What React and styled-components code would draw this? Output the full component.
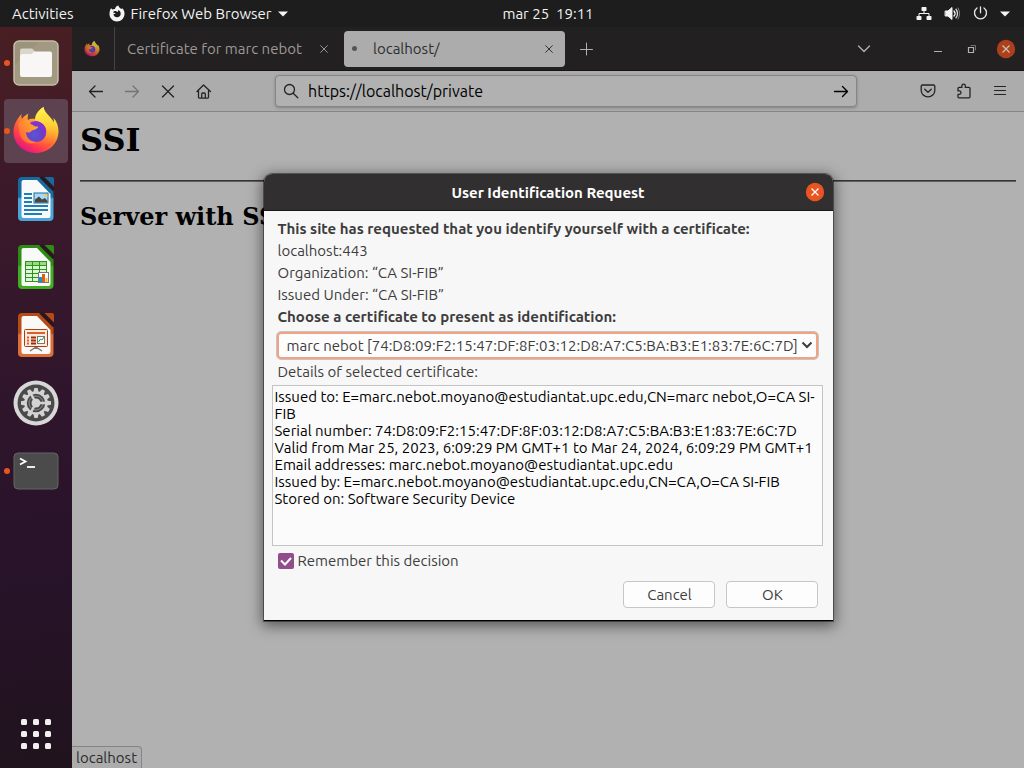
import React, { useId } from "react";
import styled, { createGlobalStyle } from "styled-components";

const GlobalStyle = createGlobalStyle`
  * { box-sizing: border-box; }
  body { margin: 0; background: #b1b1b1; font-family: Ubuntu, "Noto Sans", sans-serif; font-size: 15px; }
  button, select, input, textarea { font: inherit; margin: 0; }
  svg { display: block; flex: none; }
`;

const Desktop = styled.div`
  min-height: 100vh;
  display: flex;
  flex-direction: column;
`;

/* ---- system bar ---- */
const SystemBar = styled.header`
  display: flex;
  align-items: center;
  height: 27px;
  background: #1d1d1d;
  color: #f2f2f2;
`;
const BarLeft = styled.div`
  flex: 1 1 86px;
  display: flex;
  align-items: center;
  gap: 35px;
  padding-left: 12px;
`;
const BarRight = styled.div`
  flex: 1 1 14px;
  display: flex;
  align-items: center;
  justify-content: flex-end;
  gap: 12px;
  padding-right: 14px;
`;
const BarButton = styled.button`
  display: flex;
  align-items: center;
  gap: 6px;
  padding: 0;
  border: 0;
  background: none;
  color: inherit;
  line-height: 20px;
  white-space: pre;
`;

/* ---- dock ---- */
const Workspace = styled.div`
  flex: 1;
  display: flex;
`;
const Dock = styled.nav`
  width: 72px;
  flex: none;
  display: flex;
  flex-direction: column;
  align-items: center;
  gap: 4px;
  padding: 4px 0 2px;
  background: linear-gradient(172deg, #491f22 0%, #3b192a 24%, #31162c 45%, #28132a 72%, #20131d 100%);
`;
const DockItem = styled.button`
  position: relative;
  width: 64px;
  height: 64px;
  display: grid;
  place-items: center;
  padding: 0;
  border: 0;
  border-radius: 4px;
  background: ${(p) => (p.$active ? "#5d424f" : "transparent")};
  margin-top: ${(p) => (p.$last ? "auto" : 0)};
`;
const RunningDot = styled.span`
  position: absolute;
  left: 0;
  top: 29px;
  width: 6px;
  height: 6px;
  border-radius: 50%;
  background: #e95420;
`;

/* ---- browser window ---- */
const Browser = styled.div`
  position: relative;
  flex: 1;
  min-width: 0;
  display: flex;
  flex-direction: column;
  background: #b1b1b1;
`;
const TabStrip = styled.div`
  display: flex;
  align-items: center;
  height: 44px;
  background: #232021;
  border-bottom: 1px solid #161415;
  color: #b3b0ae;
`;
const PinnedTab = styled.button`
  width: 43px;
  height: 100%;
  padding: 0 0 0 12px;
  border: 0;
  border-right: 1px solid #454344;
  background: none;
`;
const Tab = styled.div`
  display: flex;
  align-items: center;
  gap: 10px;
  height: 36px;
  width: ${(p) => (p.$active ? 221 : 229)}px;
  padding: ${(p) => (p.$active ? "0 10px 0 8px" : "0 14px 0 12px")};
  border-radius: 4px;
  background: ${(p) => (p.$active ? "#acacac" : "transparent")};
  color: ${(p) => (p.$active ? "#2e2e2e" : "#9b9997")};
`;
const TabTitle = styled.span`
  flex: 1;
  padding-top: 1px;
  line-height: 22px;
  white-space: nowrap;
`;
const LoadingDot = styled.span`
  width: 5px;
  height: 5px;
  margin-right: 6px;
  border-radius: 50%;
  background: #555;
`;
const IconButton = styled.button`
  display: grid;
  place-items: center;
  width: ${(p) => p.$width || 36}px;
  height: ${(p) => p.$height || 36}px;
  padding: 0;
  border: 0;
  background: none;
  color: inherit;
`;
const Spacer = styled.div`
  flex: 1;
`;
const WindowControls = styled.div`
  display: flex;
  align-items: center;
  padding-left: 39px;
`;
const NavBar = styled.div`
  display: flex;
  align-items: center;
  height: 41px;
  padding: 0 6px;
  background: #acacac;
  border-bottom: 1px solid #858585;
  color: #232323;
`;
const UrlBar = styled.form`
  flex: 1;
  display: flex;
  align-items: center;
  height: 32px;
  margin: 0 53px;
  padding: 0 7px;
  gap: 8px;
  border: 1px solid #858585;
  border-radius: 4px;
  background: #b1b1b1;
  box-shadow: 0 1px 3px rgba(0, 0, 0, 0.25);
`;
const UrlInput = styled.input`
  flex: 1;
  min-width: 0;
  padding: 0 0 0 1px;
  border: 0;
  outline: 0;
  background: none;
  color: #000;
  font-size: 16px;
`;
const PageContent = styled.main`
  flex: 1;
  padding: 10px 8px;
  font-family: "DejaVu Serif", serif;
  color: #000;
`;
const PageTitle = styled.h1`
  margin: 0 0 21px;
  font-size: 32px;
  line-height: 37px;
`;
const Rule = styled.hr`
  height: 2px;
  margin: 0 0 21px;
  border: 0;
  border-top: 1px solid #363636;
  background: #606060;
`;
const PageSubtitle = styled.h2`
  margin: 0;
  font-size: 24px;
  line-height: 28px;
`;
const StatusTip = styled.div`
  position: absolute;
  left: 0;
  bottom: 0;
  height: 22px;
  padding: 0 4px;
  border: 1px solid #858585;
  border-width: 1px 1px 0 0;
  border-radius: 0 4px 0 0;
  background: #acacac;
  color: #2c2c2c;
  line-height: 22px;
`;

/* ---- dialog ---- */
const Overlay = styled.div`
  position: absolute;
  inset: 0;
  display: flex;
  justify-content: center;
  align-items: flex-start;
  padding-top: 147px;
`;
const Dialog = styled.section`
  width: 569px;
  border-radius: 8px 8px 0 0;
  background: #f7f7f7;
  color: #3d3d3d;
  border-bottom: 1px solid #000;
  box-shadow: 0 0 0 1px rgba(0, 0, 0, 0.4), 0 3px 14px 2px rgba(0, 0, 0, 0.5);
`;
const DialogHeader = styled.header`
  display: grid;
  grid-template-columns: 1fr auto 1fr;
  align-items: center;
  height: 37px;
  padding: 0 8px;
  border-radius: 8px 8px 0 0;
  border-bottom: 1px solid #1a1919;
  background: #322f30;
`;
const DialogTitle = styled.h2`
  grid-column: 2;
  margin: 0;
  padding-top: 2px;
  font-size: 15px;
  line-height: 22px;
  color: #fff;
`;
const CloseDialog = styled.button`
  justify-self: end;
  padding: 0;
  border: 0;
  background: none;
`;
const DialogBody = styled.div`
  padding: 7px 10px 12px 8px;
`;
const Line = styled.p`
  margin: 0;
  padding-left: 6px;
  line-height: 22px;
  font-weight: ${(p) => (p.$strong ? 700 : 400)};
`;
const FieldLabel = styled.label`
  display: block;
  padding-left: 6px;
  line-height: 22px;
  font-weight: ${(p) => (p.$strong ? 700 : 400)};
`;
const SelectWrap = styled.div`
  position: relative;
  margin: 4px 5px 2px;
`;
const CertSelect = styled.select`
  display: block;
  appearance: none;
  width: 100%;
  height: 27px;
  padding: 0 16px 0 8px;
  border: 2px solid #f3a184;
  border-radius: 4px;
  outline: 1px solid #c8c4c2;
  background: #fdfdfd;
  color: #3d3d3d;
`;
const SelectArrow = styled.svg`
  position: absolute;
  right: 5px;
  top: 9px;
  pointer-events: none;
`;
const Details = styled.textarea`
  display: block;
  width: 100%;
  height: 161px;
  margin-top: 2px;
  padding: 2px;
  resize: none;
  overflow: hidden;
  border: 1px solid #c4c4c4;
  outline: 0;
  background: #fbfbfb;
  color: #000;
  line-height: 17px;
`;
const CheckRow = styled.label`
  display: flex;
  align-items: center;
  gap: 4px;
  margin: 4px 0 9px;
  padding-left: 6px;
  line-height: 22px;
`;
const Checkbox = styled.input`
  appearance: none;
  width: 16px;
  height: 16px;
  border-radius: 2px;
  background: #924d8b url("data:image/svg+xml,%3Csvg xmlns='http://www.w3.org/2000/svg' viewBox='0 0 16 16' fill='none' stroke='white' stroke-width='2'%3E%3Cpath d='M3 7.5l4 4 6-6.5'/%3E%3C/svg%3E");
`;
const Actions = styled.div`
  display: flex;
  justify-content: flex-end;
  gap: 11px;
  padding-right: 5px;
`;
const DialogButton = styled.button`
  width: 92px;
  height: 27px;
  padding: 0 0 0 2px;
  border: 1px solid #c6c6c6;
  border-radius: 4px;
  background: #fdfdfd;
  color: #3d3d3d;
`;

/* ---- icons ---- */
const Stroke = ({ size = 16, width = 1, children, ...rest }) => (
  <svg width={size} height={size} viewBox="0 0 16 16" fill="none" stroke="currentColor" strokeWidth={width} strokeLinecap="round" strokeLinejoin="round" {...rest}>
    {children}
  </svg>
);

function FirefoxLogo({ size, dim }) {
  const id = useId().replace(/[^a-zA-Z0-9]/g, "");
  return (
    <svg width={size} height={size} viewBox="0 0 48 48" opacity={dim ? 0.75 : 1}>
      <defs>
        <linearGradient id={id + "a"} x1=".8" y1=".1" x2=".25" y2=".95">
          <stop offset="0" stopColor="#fff44f" />
          <stop offset=".3" stopColor="#ffb52e" />
          <stop offset=".55" stopColor="#ff6b35" />
          <stop offset=".8" stopColor="#ff3750" />
          <stop offset="1" stopColor="#e31587" />
        </linearGradient>
        <radialGradient id={id + "b"} cx=".4" cy=".65" r=".7">
          <stop offset="0" stopColor="#5a55d6" />
          <stop offset=".6" stopColor="#6a3fc8" />
          <stop offset="1" stopColor="#9a25d8" />
        </radialGradient>
        <linearGradient id={id + "c"} x1=".5" y1="0" x2=".6" y2="1">
          <stop offset="0" stopColor="#fff44f" />
          <stop offset=".5" stopColor="#ffd035" />
          <stop offset="1" stopColor="#ff8a2b" stopOpacity="0" />
        </linearGradient>
        <linearGradient id={id + "d"} x1="1" y1="0" x2="0" y2=".8">
          <stop offset="0" stopColor="#ffb82e" />
          <stop offset="1" stopColor="#ff6436" />
        </linearGradient>
      </defs>
      <path fill={`url(#${id}a)`} d="M9.500 7C6 11 1.500 17 1.500 25C1.500 37 11.500 46 24 46S46.500 36.500 46.500 24.500C46.500 19 44.500 14 41.500 11C42 14 42 15 42 16C39 9 33 7 31.500 0C27 3 24 8 24 12C19.500 11.500 17.500 12 16 13C15.500 11 15.500 8.500 16.500 6.500C13.500 8 11.500 9.500 10 12C9.300 10.500 9.200 8.500 9.500 7Z" />
      <circle cx="24" cy="24.500" r="10.500" fill={`url(#${id}b)`} />
      <path fill={`url(#${id}c)`} d="M31.500 0C25 4 22 10 23.500 13.500C32 15 36 21 34 28C32.500 34 27 37 22 35.500C28 41 40 38 43 28C45 20 42.500 16 39 11.500C35.500 8 32 5 31.500 0Z" />
      <path fill={`url(#${id}d)`} d="M6.500 16C10 13 14 13 17 13.500C17.500 16 19 17.500 21 18C22 19 23 19.500 26 19.500C27 21 22 23 20 23.500C18 26 15.500 26 14 25C14 31 19 35.500 25 35C17 39 9 34 7.500 26C7 22 6 19 6.500 16Z" />
    </svg>
  );
}

const FirefoxMono = () => (
  <svg width="16" height="18" viewBox="0 0 16 18" fill="#f4f4f4">
    <path fillRule="evenodd" d="M2.200 3C2.400 3.700 2.800 4.200 3.200 4.600C4 4.200 5 4 6 4.100C6.200 2.500 7.300.900 9.500.500C9.600 2.300 11 3 12.300 4L13.200 3.300C15 5 15.700 7.100 15.500 9.300C15.200 13.400 12 16.500 8 16.500S.500 13.300.500 9.300C.500 6.800 1 4.700 2.200 3ZM7.200 6.200C5.700 5.800 5 6.700 4 7C4.200 7.800 5.300 7.900 6.700 8.100C6.300 9 5.300 9.200 4.400 9.200C4.800 11 6.200 12.300 8 12.300C10.200 12.300 11.700 10.700 11.700 8.700C11.700 6.800 10.500 5.500 9 5.100C9.300 5.800 9.200 6.300 8.500 7Z" />
  </svg>
);

const Caret = () => (
  <svg width="10" height="6" viewBox="0 0 10 6" fill="#f4f4f4"><path d="M0 .5h10L5 5.500z" /></svg>
);

const FilesIcon = () => (
  <svg width="46" height="46" viewBox="0 0 46 46">
    <rect x="1" y="1" width="44" height="44" rx="5" fill="#9c937d" stroke="#c5bea8" strokeWidth="1.500" />
    <path d="M2 39V25L26 2h18v42H5z" fill="#a79e89" opacity=".55" />
    <path d="M7 10.500a2 2 0 012-2h10l3 3v8H7z" fill="#dad6c9" />
    <path d="M7 17c0-2 1-3 3-3h8c2 0 2-2.500 4.500-2.500H37a2 2 0 012 2V35a2 2 0 01-2 2H9a2 2 0 01-2-2z" fill="#f8f7f5" />
  </svg>
);

function DocumentIcon({ dark, light, children }) {
  const id = useId().replace(/[^a-zA-Z0-9]/g, "");
  return (
    <svg width="38" height="46" viewBox="0 0 38 46">
      <defs>
        <linearGradient id={id} x1="0" y1="0" x2="0" y2="1">
          <stop offset="0" stopColor={dark} />
          <stop offset=".45" stopColor={dark} />
          <stop offset=".5" stopColor={light} />
          <stop offset="1" stopColor={light} />
        </linearGradient>
      </defs>
      <path d="M5 1h17l14.500 14.500V41a4 4 0 01-4 4H5a4 4 0 01-4-4V5a4 4 0 014-4z" fill={`url(#${id})`} />
      <path d="M6.500 4H20l13.500 14v22a2 2 0 01-2 2h-25a2 2 0 01-2-2V6a2 2 0 012-2z" fill="#f9f9f9" />
      <path d="M24 1l13 13" stroke="#26181f" strokeWidth="3" opacity=".8" />
      <path d="M27.500 1H35a2 2 0 012 2v7.500z" fill={dark} />
      {children}
    </svg>
  );
}

const WriterIcon = () => (
  <DocumentIcon dark="#166a9e" light="#4aa5d8">
    <path d="M7 18h8M7 22h8M7 26h8M7 30h24M7 34h24M7 38h18" stroke="#1d7fb9" strokeWidth="2" />
    <rect x="17" y="17" width="14" height="10" fill="#a6daf5" stroke="#1a6ca1" />
    <path d="M18 26.500v-3l4-3 3 3 3-1.500 2.500 3v1.500z" fill="#49443e" />
    <path d="M27 18h3.500v3.500z" fill="#f5c33a" />
  </DocumentIcon>
);

const CalcIcon = () => (
  <DocumentIcon dark="#2c8d12" light="#41ae22">
    <rect x="8.500" y="17.500" width="21" height="20" fill="#e0f6d9" stroke="#2b9515" />
    <rect x="9" y="18" width="20" height="4" fill="#9ad985" />
    <path d="M8 21.500h22M8 25.500h22M8 29.500h22M8 33.500h22M15.500 17v21M22.500 17v21" stroke="#2b9515" />
    <rect x="21.500" y="28.500" width="10" height="10" fill="#fff" stroke="#777" />
    <path d="M23.500 38v-5" stroke="#1d91d0" strokeWidth="3" />
    <path d="M26.500 38v-8" stroke="#df5c15" strokeWidth="3" />
    <path d="M29.500 38v-4" stroke="#f2bb2b" strokeWidth="2" />
  </DocumentIcon>
);

const ImpressIcon = () => (
  <DocumentIcon dark="#b64b13" light="#df6d35">
    <path d="M19 35l-6 4M19 35l6 4M19 34v3" stroke="#777" strokeWidth="1.500" />
    <rect x="7.500" y="17.500" width="23" height="17" rx="1" fill="#fbe9df" stroke="#ad3f0b" />
    <path d="M10 21h18" stroke="#d6622b" strokeWidth="2" />
    <path d="M10 25.500h2M10 28.500h2M10 31.500h2" stroke="#de5f22" strokeWidth="2" />
    <path d="M14 25.500h5M14 28.500h5M14 31.500h5" stroke="#9d2d05" strokeWidth="2" />
    <rect x="20.500" y="24.500" width="7" height="7" fill="#fff" stroke="#777" />
    <path d="M21.500 30l2-3 1.500 1 2-3" stroke="#2d9a2d" fill="none" />
  </DocumentIcon>
);

const SettingsIcon = () => (
  <svg width="46" height="46" viewBox="0 0 46 46">
    <circle cx="23" cy="23" r="22.500" fill="#d9d8d8" />
    <circle cx="23" cy="23" r="18.500" fill="#4b4a4a" />
    <g fill="#d4d3d3">
      {Array.from({ length: 12 }, (_, i) => (
        <path key={i} d="M21.300 8h3.400l.8 4h-5z" transform={`rotate(${i * 30} 23 23)`} />
      ))}
    </g>
    <circle cx="23" cy="23" r="10.500" fill="none" stroke="#d4d3d3" strokeWidth="2.500" />
    <circle cx="23" cy="23" r="7" fill="none" stroke="#8c8b8b" strokeWidth="1" />
    <path d="M23 23h10M23 23l-5-9M23 23l-5 9" stroke="#d4d3d3" strokeWidth="2.500" />
    <circle cx="23" cy="23" r="4.500" fill="#d4d3d3" />
  </svg>
);

const TerminalIcon = () => (
  <svg width="46" height="38" viewBox="0 0 46 38">
    <rect x="1" y="1" width="44" height="36" rx="4" fill="#4b4b4b" stroke="#656565" />
    <path d="M7 6.500l5.500 3L7 12.500" fill="none" stroke="#fff" strokeWidth="1.800" />
    <path d="M14 15h8" stroke="#fff" strokeWidth="1.800" />
  </svg>
);

const AppsIcon = () => (
  <svg width="30" height="30" viewBox="0 0 30 30" fill="#f2f0ee">
    {[0, 12, 24].map((y) => [0, 12, 24].map((x) => <rect key={`${x}-${y}`} x={x} y={y} width="6" height="6" rx="1.500" />))}
  </svg>
);

const NetworkIcon = () => (
  <svg width="16" height="16" viewBox="0 0 16 16" fill="#f4f4f4">
    <rect x="5.500" y="1" width="5" height="4" rx=".8" />
    <rect x=".5" y="10" width="5" height="4" rx=".8" />
    <rect x="10.500" y="10" width="5" height="4" rx=".8" />
    <path d="M8 5v2.500M3 10V7.500h10V10" fill="none" stroke="#f4f4f4" />
  </svg>
);

const SoundIcon = () => (
  <svg width="16" height="16" viewBox="0 0 16 16" fill="none" stroke="#f4f4f4" strokeLinecap="round">
    <path d="M1.500 5h2.500L8 1.500v12L4 10H1.500z" fill="#f4f4f4" />
    <path d="M10 5c1.300 1.500 1.300 3.500 0 5" strokeWidth="1.300" />
    <path d="M12 3.200c2 2.300 2 6.300 0 8.600" stroke="#dcdcdc" strokeWidth="1.300" />
    <path d="M14 2c2 3.200 2 7.800 0 11" stroke="#858585" />
  </svg>
);

const PowerIcon = () => (
  <svg width="16" height="16" viewBox="0 0 16 16" fill="none" stroke="#e8e8e8" strokeWidth="1.300" strokeLinecap="round">
    <path d="M8.500.800v6M5 2a6 6 0 107 0" />
  </svg>
);

const RoundClose = ({ fill, stroke }) => (
  <svg width="20" height="20" viewBox="0 0 20 20">
    <circle cx="10" cy="10" r="9.200" fill={fill} />
    <path d="M6.500 6.500l7 7M13.500 6.500l-7 7" stroke={stroke} strokeWidth="1.300" />
  </svg>
);

const TabClose = () => (
  <IconButton $width={12} $height={20} aria-label="Close tab">
    <Stroke size={12}><path d="M3.500 3.500l9 9M12.500 3.500l-9 9" strokeWidth="1.300" /></Stroke>
  </IconButton>
);

const certificate = "marc nebot [74:D8:09:F2:15:47:DF:8F:03:12:D8:A7:C5:BA:B3:E1:83:7E:6C:7D]";
const details = [
  "Issued to: E=marc.nebot.moyano@estudiantat.upc.edu,CN=marc nebot,O=CA SI-FIB",
  "Serial number: 74:D8:09:F2:15:47:DF:8F:03:12:D8:A7:C5:BA:B3:E1:83:7E:6C:7D",
  "Valid from Mar 25, 2023, 6:09:29 PM GMT+1 to Mar 24, 2024, 6:09:29 PM GMT+1",
  "Email addresses: marc.nebot.moyano@estudiantat.upc.edu",
  "Issued by: E=marc.nebot.moyano@estudiantat.upc.edu,CN=CA,O=CA SI-FIB",
  "Stored on: Software Security Device",
].join("\n");

const dockApps = [
  { name: "Files", icon: <FilesIcon />, running: true },
  { name: "Firefox", icon: <FirefoxLogo size={48} />, running: true, active: true },
  { name: "Writer", icon: <WriterIcon /> },
  { name: "Calc", icon: <CalcIcon /> },
  { name: "Impress", icon: <ImpressIcon /> },
  { name: "Settings", icon: <SettingsIcon /> },
  { name: "Terminal", icon: <TerminalIcon />, running: true },
];

export default function App() {
  return (
    <Desktop>
      <GlobalStyle />
      <SystemBar>
        <BarLeft>
          <BarButton>Activities</BarButton>
          <BarButton><FirefoxMono />Firefox Web Browser<Caret /></BarButton>
        </BarLeft>
        <BarButton>mar 25  19:11</BarButton>
        <BarRight>
          <NetworkIcon />
          <SoundIcon />
          <PowerIcon />
          <Caret />
        </BarRight>
      </SystemBar>
      <Workspace>
        <Dock>
          {dockApps.map((app) => (
            <DockItem key={app.name} aria-label={app.name} $active={app.active}>
              {app.running && <RunningDot />}
              {app.icon}
            </DockItem>
          ))}
          <DockItem aria-label="Show applications" $last><AppsIcon /></DockItem>
        </Dock>
        <Browser>
          <TabStrip>
            <PinnedTab aria-label="Firefox"><FirefoxLogo size={16} dim /></PinnedTab>
            <Tab><TabTitle>Certificate for marc nebot</TabTitle><TabClose /></Tab>
            <Tab $active><LoadingDot /><TabTitle>localhost/</TabTitle><TabClose /></Tab>
            <IconButton $width={43} aria-label="New tab"><Stroke><path d="M7.500 2v12M1.500 8.500h12" /></Stroke></IconButton>
            <Spacer />
            <IconButton aria-label="List tabs"><Stroke><path d="M2.500 5L8 10.500 13.500 5" strokeWidth="1.300" /></Stroke></IconButton>
            <WindowControls>
              <IconButton $width={33} aria-label="Minimize"><Stroke><path d="M4 10.500h8" strokeLinecap="butt" /></Stroke></IconButton>
              <IconButton $width={34} aria-label="Restore">
                <Stroke strokeLinejoin="miter"><path d="M5.500 6.500h5v5h-5z" strokeWidth="1.200" /><path d="M8 4.500h4.500V9" opacity=".55" /></Stroke>
              </IconButton>
              <IconButton aria-label="Close window"><RoundClose fill="#ac401b" stroke="#cbbcb5" /></IconButton>
            </WindowControls>
          </TabStrip>
          <NavBar>
            <IconButton aria-label="Back"><Stroke width={1.3}><path d="M14.500 8.500h-13M7 3L1.500 8.500 7 14" /></Stroke></IconButton>
            <IconButton aria-label="Forward"><Stroke width={1.3} opacity=".4"><path d="M1.500 8.500h13M9 3L14.500 8.500 9 14" /></Stroke></IconButton>
            <IconButton aria-label="Stop"><Stroke width={1.3}><path d="M2.500 3l11 11M13.500 3l-11 11" /></Stroke></IconButton>
            <IconButton aria-label="Home">
              <Stroke width={1.3}><path d="M1 8.500L7.500 2 14.500 8.500M2.500 7.500v6.500a1.200 1.200 0 001.200 1.200h7.600a1.200 1.200 0 001.200-1.200V7.500M5.700 15v-4c0-.7.3-1 1-1h1.600c.7 0 1 .3 1 1v4" /></Stroke>
            </IconButton>
            <UrlBar onSubmit={(e) => e.preventDefault()}>
              <Stroke width={1.3}><circle cx="6.500" cy="6.500" r="5" /><path d="M10.200 10.200l4.600 4.600" /></Stroke>
              <UrlInput aria-label="Address" defaultValue="https://localhost/private" />
              <Stroke width={1.4} color="#000"><path d="M1.500 8.500h13M9.500 3.500l5 5-5 5" /></Stroke>
            </UrlBar>
            <IconButton aria-label="Pocket"><Stroke width={1.3}><path d="M2.500 2h11c.8 0 1.300.5 1.300 1.300V7.500a6.800 6.300 0 01-13.600 0V3.300C1.200 2.500 1.700 2 2.500 2zM4.700 6.200L8 9.300l3.300-3.100" /></Stroke></IconButton>
            <IconButton aria-label="Extensions"><Stroke width={1.3}><path d="M2 5.500c0-.8.300-1.100 1.100-1.100h2.800V2.800a1.700 1.700 0 013.400 0v1.600h3.600c.8 0 1.100.3 1.100 1.100v8.200c0 .8-.3 1.100-1.100 1.100H3.100c-.8 0-1.100-.3-1.100-1.100v-2.400h1.300a1.700 1.700 0 000-3.400H2z" /></Stroke></IconButton>
            <IconButton aria-label="Menu"><Stroke width={1.2}><path d="M2.500 3.500h11M2.500 7.500h11M2.500 11.500h11" /></Stroke></IconButton>
          </NavBar>
          <PageContent>
            <PageTitle>SSI</PageTitle>
            <Rule />
            <PageSubtitle>Server with SSL</PageSubtitle>
          </PageContent>
          <StatusTip>localhost</StatusTip>
          <Overlay>
            <Dialog role="dialog" aria-labelledby="dialog-title">
              <DialogHeader>
                <DialogTitle id="dialog-title">User Identification Request</DialogTitle>
                <CloseDialog aria-label="Close"><RoundClose fill="#e95420" stroke="#fff" /></CloseDialog>
              </DialogHeader>
              <DialogBody>
                <Line $strong>This site has requested that you identify yourself with a certificate:</Line>
                <Line>localhost:443</Line>
                <Line>Organization: “CA SI-FIB”</Line>
                <Line>Issued Under: “CA SI-FIB”</Line>
                <FieldLabel $strong htmlFor="certificate">Choose a certificate to present as identification:</FieldLabel>
                <SelectWrap>
                  <CertSelect id="certificate"><option>{certificate}</option></CertSelect>
                  <SelectArrow width="12" height="8" viewBox="0 0 12 8" fill="none" stroke="#3d3d3d" strokeWidth="2"><path d="M1.500 1.500L6 6l4.500-4.500" /></SelectArrow>
                </SelectWrap>
                <FieldLabel htmlFor="details">Details of selected certificate:</FieldLabel>
                <Details id="details" readOnly spellCheck={false} value={details} />
                <CheckRow><Checkbox type="checkbox" defaultChecked />Remember this decision</CheckRow>
                <Actions>
                  <DialogButton>Cancel</DialogButton>
                  <DialogButton>OK</DialogButton>
                </Actions>
              </DialogBody>
            </Dialog>
          </Overlay>
        </Browser>
      </Workspace>
    </Desktop>
  );
}
